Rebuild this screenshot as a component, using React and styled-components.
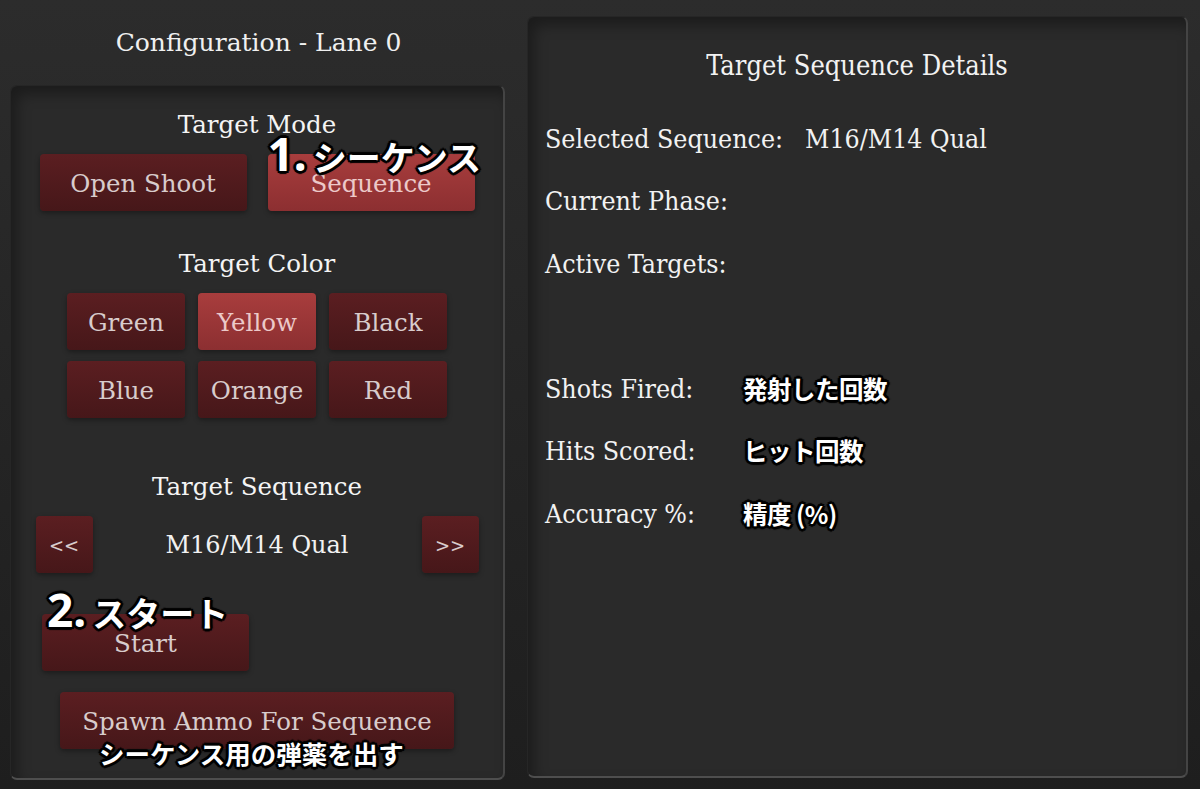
import React from "react";
import styled, { createGlobalStyle, css } from "styled-components";

const GlobalStyle = createGlobalStyle`
  html, body {
    margin: 0;
    padding: 0;
    height: 100%;
  }
  body {
    background: linear-gradient(#2c2c2c, #1e1e1e);
    font-family: "DejaVu Serif", "Liberation Serif", serif;
    color: #f2f2f2;
    overflow: hidden;
  }
`;

const Page = styled.div`
  display: flex;
  align-items: flex-start;
  width: 1200px;
  height: 789px;
  padding-left: 10px;
  box-sizing: border-box;
`;

const LeftColumn = styled.div`
  display: flex;
  flex-direction: column;
  width: 495px;
`;

const Header = styled.div`
  height: 85px;
  display: flex;
  align-items: center;
  justify-content: center;
  font-size: 25px;
  color: #f0f0f0;
  padding-left: 2px;
  box-sizing: border-box;
`;

const panelLook = css`
  background: #2a2a2a;
  border-radius: 7px;
  border: 1px solid #262626;
  border-bottom: 2px solid #4e4e4e;
  border-right: 2px solid #444;
  box-shadow: inset 6px 8px 14px rgba(0, 0, 0, 0.35);
  box-sizing: border-box;
`;

const ConfigPanel = styled.div`
  ${panelLook}
  height: 695px;
  display: flex;
  flex-direction: column;
  align-items: center;
  padding-top: 24px;
`;

const Label = styled.div`
  height: 30px;
  line-height: 30px;
  font-size: 24.5px;
  text-align: center;
  color: #f4f4f4;
  margin-top: ${(p) => p.$top ?? 0}px;
`;

const Row = styled.div`
  position: relative;
  display: flex;
  justify-content: center;
  gap: ${(p) => p.$gap ?? 21}px;
  margin-top: ${(p) => p.$top ?? 14}px;
  align-self: ${(p) => (p.$start ? "flex-start" : "center")};
  margin-left: ${(p) => (p.$start ? 31 : 0)}px;
`;

const Grid = styled.div`
  display: grid;
  grid-template-columns: repeat(3, 118px);
  column-gap: 13px;
  row-gap: 11px;
  margin-top: 14px;
`;

const Button = styled.div`
  width: ${(p) => p.$w ?? 118}px;
  height: 57px;
  border-radius: 4px;
  display: flex;
  align-items: center;
  justify-content: center;
  font-size: ${(p) => p.$size ?? 24.5}px;
  color: ${(p) => (p.$active ? "#ecc9c9" : "#d8cccc")};
  background: ${(p) =>
    p.$active
      ? "linear-gradient(#a83d3d, #8c2f31)"
      : "linear-gradient(#5b1e21, #461719)"};
  box-shadow: 0 2px 5px rgba(0, 0, 0, 0.35);
  box-sizing: border-box;
  padding-top: 2px;
`;

const SeqName = styled.div`
  width: 329px;
  display: flex;
  align-items: center;
  justify-content: center;
  font-size: 24px;
  color: #f2f2f2;
`;

const outline = css`
  font-family: "Noto Sans CJK JP", "Noto Sans", sans-serif;
  font-weight: 700;
  color: #ffffff;
  white-space: nowrap;
  text-shadow: 2px 0 0 #000, -2px 0 0 #000, 0 2px 0 #000, 0 -2px 0 #000,
    2px 2px 0 #000, -2px -2px 0 #000, 2px -2px 0 #000, -2px 2px 0 #000,
    3px 0 1px #000, -3px 0 1px #000, 0 3px 1px #000, 0 -3px 1px #000;
`;

const Callout = styled.div`
  ${outline}
  position: absolute;
  left: ${(p) => p.$x}px;
  top: ${(p) => p.$y}px;
  font-size: ${(p) => p.$size ?? 34}px;
  line-height: 1;
  z-index: 2;
`;

const Num = styled.span`
  font-family: "Noto Sans", sans-serif;
  font-size: 46px;
  margin-right: 6px;
`;

const DetailsPanel = styled.div`
  ${panelLook}
  margin-top: 16px;
  margin-left: 22px;
  width: 661px;
  height: 762px;
  padding: 34px 0 0 17px;
  font-family: "DejaVu Serif Condensed", "DejaVu Serif", serif;
`;

const DetailsTitle = styled.div`
  text-align: center;
  font-size: 27px;
  height: 30px;
  line-height: 30px;
  margin-bottom: 26px;
  padding-right: 17px;
`;

const DetailRow = styled.div`
  display: flex;
  align-items: center;
  height: 62.5px;
  font-size: 26.5px;
  color: #f2f2f2;
  margin-top: ${(p) => (p.$gap ? 62.5 : 0)}px;
`;

const Key = styled.div`
  width: ${(p) => p.$w ?? 198}px;
  flex-shrink: 0;
`;

const Value = styled.div`
  ${(p) => p.$jp && outline}
  ${(p) => p.$jp && "font-size: 24.5px; letter-spacing: -0.5px;"}
`;

export default function App() {
  return (
    <>
      <GlobalStyle />
      <Page>
        <LeftColumn>
          <Header>Configuration - Lane 0</Header>
          <ConfigPanel>
            <Label>Target Mode</Label>
            <Row>
              <Button $w={207}>Open Shoot</Button>
              <Button $w={207} $active>
                Sequence
              </Button>
              <Callout $x={228} $y={-24}>
                <Num>1.</Num>シーケンス
              </Callout>
            </Row>

            <Label $top={38}>Target Color</Label>
            <Grid>
              <Button>Green</Button>
              <Button $active>Yellow</Button>
              <Button>Black</Button>
              <Button>Blue</Button>
              <Button>Orange</Button>
              <Button>Red</Button>
            </Grid>

            <Label $top={54}>Target Sequence</Label>
            <Row $gap={0}>
              <Button $w={57} $size={18}>
                &lt;&lt;
              </Button>
              <SeqName>M16/M14 Qual</SeqName>
              <Button $w={57} $size={18}>
                &gt;&gt;
              </Button>
            </Row>

            <Row $top={41} $start>
              <Button $w={207}>Start</Button>
              <Callout $x={5} $y={-28}>
                <Num>2.</Num>スタート
              </Callout>
            </Row>

            <Row $top={21}>
              <Button $w={394}>Spawn Ammo For Sequence</Button>
              <Callout $x={39} $y={48} $size={25.5}>
                シーケンス用の弾薬を出す
              </Callout>
            </Row>
          </ConfigPanel>
        </LeftColumn>

        <DetailsPanel>
          <DetailsTitle>Target Sequence Details</DetailsTitle>
          <DetailRow>
            <Key $w={260}>Selected Sequence:</Key>
            <Value>M16/M14 Qual</Value>
          </DetailRow>
          <DetailRow>
            <Key>Current Phase:</Key>
          </DetailRow>
          <DetailRow>
            <Key>Active Targets:</Key>
          </DetailRow>
          <DetailRow $gap>
            <Key>Shots Fired:</Key>
            <Value $jp>発射した回数</Value>
          </DetailRow>
          <DetailRow>
            <Key>Hits Scored:</Key>
            <Value $jp>ヒット回数</Value>
          </DetailRow>
          <DetailRow>
            <Key>Accuracy %:</Key>
            <Value $jp>精度 (%)</Value>
          </DetailRow>
        </DetailsPanel>
      </Page>
    </>
  );
}
